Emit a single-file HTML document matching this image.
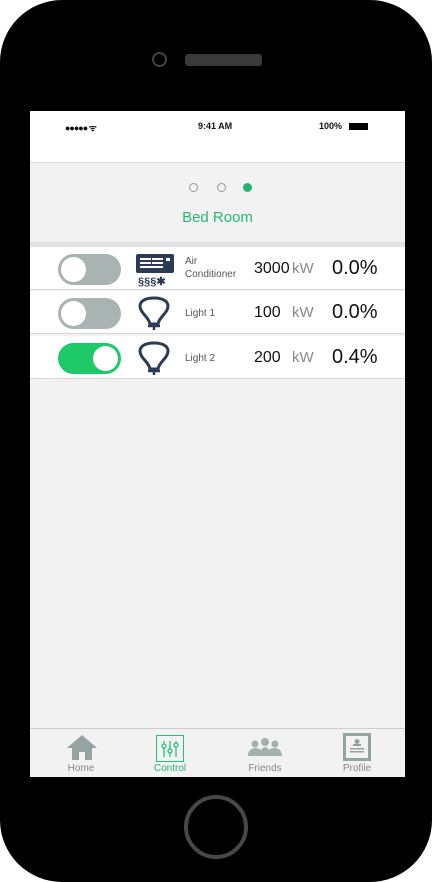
<!DOCTYPE html>
<html><head><style>
*{margin:0;padding:0;box-sizing:border-box}
body{width:432px;height:882px;background:#fff;position:relative;overflow:hidden;font-family:"Liberation Sans",sans-serif}
.phone{position:absolute;left:0;top:0;width:432px;height:882px;background:#000;border-radius:62px}
.screen{position:absolute;left:30px;top:111px;width:375px;height:666px;background:#f2f2f2;overflow:hidden}
.status{position:absolute;left:0;top:0;width:375px;height:52px;background:#fff;border-bottom:1px solid #ddd;font-size:9px;font-weight:bold;color:#111}
.row{position:absolute;left:0;width:375px;height:43px;background:#fff;border-bottom:1px solid #d6d6d6}
.tog{position:absolute;left:28px;top:7px;width:63px;height:31px;border-radius:16px;background:#a9b4b2}
.tog i{position:absolute;top:3px;width:25px;height:25px;border-radius:50%;background:#fff}
.name{position:absolute;left:155px;font-size:10px;color:#555}
.kw{position:absolute;font-size:16px;color:#111}
.u{position:absolute;left:262px;font-size:15px;color:#888}
.pct{position:absolute;left:302px;font-size:20px;color:#111}
.tab{position:absolute;top:617px;width:375px;height:49px;background:#f2f2f2;border-top:1px solid #ccc}
.tl{position:absolute;top:34px;font-size:10px;color:#888;text-align:center;width:60px}
</style></head><body>
<div class="phone">
<div style="position:absolute;left:152px;top:52px;width:15px;height:15px;border:2px solid #444;border-radius:50%"></div>
<div style="position:absolute;left:185px;top:54px;width:77px;height:12px;background:#3a3a3a;border-radius:3px"></div>
<div style="position:absolute;left:184px;top:795px;width:64px;height:64px;border:4px solid #484848;border-radius:50%"></div>
</div>
<div class="screen">
<div class="status">
<span style="position:absolute;left:35px;top:10px;letter-spacing:-1px">●●●●● ᯤ</span>
<span style="position:absolute;left:168px;top:10px">9:41 AM</span>
<span style="position:absolute;left:289px;top:10px">100%</span>
<span style="position:absolute;left:319px;top:12px;width:19px;height:7px;background:#000"></span>
</div>
<div style="position:absolute;left:159px;top:72px;width:9px;height:9px;border:1.5px solid #999;border-radius:50%"></div>
<div style="position:absolute;left:187px;top:72px;width:9px;height:9px;border:1.5px solid #999;border-radius:50%"></div>
<div style="position:absolute;left:213px;top:72px;width:9px;height:9px;background:#23b46c;border-radius:50%"></div>
<div style="position:absolute;left:0;width:375px;top:98px;text-align:center;font-size:15px;color:#2bb673">Bed Room</div>
<div style="position:absolute;left:0;top:131px;width:375px;height:5px;background:#e2e2e2"></div>

<div class="row" style="top:136px">
<div class="tog"><i style="left:3px"></i></div>
<svg style="position:absolute;left:105px;top:6px" width="40" height="34" viewBox="0 0 40 34"><rect x="1" y="1" width="38" height="19" rx="2" fill="#2d3a55"/><g fill="#fff"><rect x="5" y="5" width="11" height="2"/><rect x="17" y="5" width="11" height="2"/><rect x="5" y="9" width="11" height="2"/><rect x="17" y="9" width="11" height="2"/><rect x="5" y="13" width="23" height="2"/><rect x="31" y="5" width="4" height="3"/></g><text x="3" y="32" font-size="11" font-weight="bold" fill="#2d3a55" font-family="Liberation Sans">§§§✱</text></svg>
<div class="name" style="top:8px;line-height:13px">Air<br>Conditioner</div>
<div class="kw" style="left:224px;top:13px">3000</div><div class="u" style="top:13px">kW</div><div class="pct" style="top:10px">0.0%</div>
</div>

<div class="row" style="top:180px">
<div class="tog"><i style="left:3px"></i></div>
<svg style="position:absolute;left:107px;top:4px" width="34" height="36" viewBox="0 0 34 36"><path d="M17 3C7 3 3 7 3 11c0 7 9 11 10 18h8c1-7 10-11 10-18 0-4-4-8-14-8z" fill="none" stroke="#2d3a55" stroke-width="3"/><path d="M11 31h12M17 31v4" stroke="#2d3a55" stroke-width="2.5"/></svg>
<div class="name" style="top:17px">Light 1</div>
<div class="kw" style="left:224px;top:13px">100</div><div class="u" style="top:13px">kW</div><div class="pct" style="top:10px">0.0%</div>
</div>

<div class="row" style="top:225px">
<div class="tog" style="background:#1ec96a"><i style="left:35px"></i></div>
<svg style="position:absolute;left:107px;top:4px" width="34" height="36" viewBox="0 0 34 36"><path d="M17 3C7 3 3 7 3 11c0 7 9 11 10 18h8c1-7 10-11 10-18 0-4-4-8-14-8z" fill="none" stroke="#2d3a55" stroke-width="3"/><path d="M11 31h12M17 31v4" stroke="#2d3a55" stroke-width="2.5"/></svg>
<div class="name" style="top:17px">Light 2</div>
<div class="kw" style="left:224px;top:13px">200</div><div class="u" style="top:13px">kW</div><div class="pct" style="top:10px">0.4%</div>
</div>

<div class="tab">
<svg style="position:absolute;left:36px;top:5px" width="32" height="26" viewBox="0 0 32 26"><path d="M16 1L1 14h5v12h7v-8h6v8h7V14h5z" fill="#95a3a1"/></svg>
<div class="tl" style="left:21px">Home</div>
<div style="position:absolute;left:126px;top:6px;width:28px;height:27px;border:1.5px solid #2bc077"></div>
<svg style="position:absolute;left:130px;top:10px" width="20" height="20" viewBox="0 0 20 20" stroke="#2bc077" stroke-width="1.3" fill="none"><path d="M4 2v16M10 2v16M16 2v16"/><circle cx="4" cy="7" r="2" fill="#f2f2f2"/><circle cx="10" cy="12" r="2" fill="#f2f2f2"/><circle cx="16" cy="6" r="2" fill="#f2f2f2"/></svg>
<div class="tl" style="left:110px;color:#2bb673">Control</div>
<svg style="position:absolute;left:218px;top:7px" width="34" height="22" viewBox="0 0 34 22" fill="#a4b0ae"><circle cx="7" cy="8" r="3.5"/><circle cx="17" cy="6" r="4"/><circle cx="27" cy="8" r="3.5"/><path d="M0 20c0-6 4-8 7-8s5 1 6 2c1-2 3-3 4-3s3 1 4 3c1-1 3-2 6-2s7 2 7 8z"/></svg>
<div class="tl" style="left:205px">Friends</div>
<div style="position:absolute;left:313px;top:4px;width:28px;height:28px;border:3px solid #95a3a1"></div>
<svg style="position:absolute;left:318px;top:9px" width="18" height="18" viewBox="0 0 18 18" fill="#95a3a1"><circle cx="9" cy="3.5" r="2.5"/><rect x="5" y="6" width="8" height="2"/><rect x="2" y="10" width="14" height="1.5"/><rect x="2" y="13" width="14" height="1.5"/></svg>
<div class="tl" style="left:297px">Profile</div>
</div>
</div>
</body></html>
